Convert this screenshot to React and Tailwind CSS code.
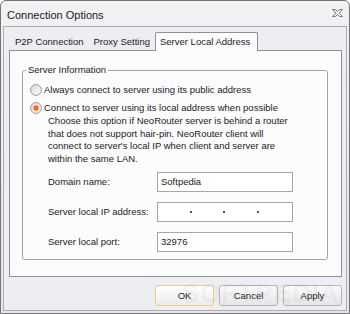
import React from "react";

function Radio({ checked }) {
  return (
    <svg width="12" height="12" viewBox="0 0 12 12" className="shrink-0">
      <defs>
        <linearGradient id={checked ? "rgc" : "rgu"} x1="0" y1="0" x2="1" y2="1">
          <stop offset="0" stopColor={checked ? "#f3e2d4" : "#d6d6d6"} />
          <stop offset="1" stopColor="#ffffff" />
        </linearGradient>
      </defs>
      <circle cx="6" cy="6" r="5.4" fill={`url(#${checked ? "rgc" : "rgu"})`} stroke="#8f8f8f" strokeWidth="0.9" />
      {checked && (
        <>
          <circle cx="6" cy="6" r="3.4" fill="#f8c49a" />
          <circle cx="6" cy="6" r="2.4" fill="#e2641a" />
          <circle cx="5.5" cy="5.4" r="0.9" fill="#f59a55" />
        </>
      )}
    </svg>
  );
}

function CloseIcon() {
  return (
    <svg width="11" height="8" viewBox="0 0 11 8" className="mt-[8px]">
      <polygon
        points="0.5,0.5 3.2,0.5 5.5,2.4 7.8,0.5 10.5,0.5 7.2,4 10.5,7.5 7.8,7.5 5.5,5.6 3.2,7.5 0.5,7.5 3.8,4"
        fill="#f4f4f6"
        stroke="#6e6e72"
        strokeWidth="0.9"
        strokeLinejoin="round"
      />
    </svg>
  );
}

function Field({ label, children }) {
  return (
    <div className="flex items-center h-[20px]">
      <span className="w-[109px]">{label}</span>
      <div className="w-[136px] h-[20px] border border-[#a5a7ad] bg-white flex items-center px-[3px]">
        {children}
      </div>
    </div>
  );
}

export default function App() {
  return (
    <div className="w-[350px] h-[314px] relative font-['Liberation_Sans',Arial,sans-serif] text-[#1b1b1b] text-[9.5px] leading-[12px]">
      <div className="w-full h-full flex flex-col bg-gradient-to-b from-[#f2f2f5] to-[#e6e6eb] border border-[#747478] rounded-t-[6px] px-[2px] pb-[2px]">
        <div className="h-[25px] shrink-0 flex items-start justify-between pl-[4px] pr-[4px]">
          <span className="mt-[8px] text-[11px] leading-[13px] text-[#1a1a1a]">Connection Options</span>
          <CloseIcon />
        </div>
        <div className="flex-1 border border-[#acacb2] bg-[#eeeef2] flex flex-col pl-[5px] pr-[4px] pt-[5px] pb-[4px]">
          <div className="h-[18px] flex items-end ml-[1px] shrink-0">
            <div className="h-[18px] px-[5px] pt-[1px] flex items-center">P2P Connection</div>
            <div className="h-[18px] px-[5px] pt-[1px] flex items-center">Proxy Setting</div>
            <div className="h-[19px] -mb-px relative z-10 border border-b-0 border-[#8e9197] bg-[#fcfcfc] rounded-t-[2px] pl-[4px] pr-[7px] flex items-center">
              Server Local Address
            </div>
          </div>
          <div className="h-[227px] shrink-0 border border-[#8e9197] bg-[#fcfcfc] flex flex-col">
            <fieldset className="ml-[12px] mr-[13px] mt-[13px] border border-[#a3a3a6] rounded-[3px] pb-[7px]">
              <legend className="ml-[3px] px-[2px] leading-[12px]">Server Information</legend>
              <div className="pl-[7px] pt-[7px] flex flex-col">
                <div className="flex items-center h-[14px] gap-[2px]">
                  <Radio checked={false} />
                  <span>Always connect to server using its public address</span>
                </div>
                <div className="flex items-center h-[14px] gap-[2px] mt-[4px]">
                  <Radio checked />
                  <span>Connect to server using its local address when possible</span>
                </div>
                <div className="pl-[18px] flex flex-col">
                  <p className="leading-[12.5px] w-[250px]">
                    Choose this option if NeoRouter server is behind a router that does not support hair-pin. NeoRouter client will connect to server's local IP when client and server are within the same LAN.
                  </p>
                  <div className="mt-[7px] flex flex-col gap-[10px]">
                    <Field label="Domain name:">
                      <span>Softpedia</span>
                    </Field>
                    <Field label="Server local IP address:">
                      <div className="grid grid-cols-4 w-full h-full -mx-[3px] min-w-[134px]">
                        <div className="flex items-center justify-end"><span className="w-[2px] h-[2px] bg-[#4a5070]" /></div>
                        <div className="flex items-center justify-end"><span className="w-[2px] h-[2px] bg-[#4a5070]" /></div>
                        <div className="flex items-center justify-end"><span className="w-[2px] h-[2px] bg-[#4a5070]" /></div>
                        <div />
                      </div>
                    </Field>
                    <Field label="Server local port:">
                      <span>32976</span>
                    </Field>
                  </div>
                </div>
              </div>
            </fieldset>
          </div>
          <div className="mt-[8px] h-[21px] flex justify-end gap-[5px] shrink-0">
            <button className="w-[59px] h-[21px] rounded-[3px] border border-[#ead07a] bg-gradient-to-b from-[#ffffff] to-[#ececee] flex items-center justify-center">
              OK
            </button>
            <button className="w-[59px] h-[21px] rounded-[3px] border border-[#b4b4b8] bg-gradient-to-b from-[#fafafa] to-[#e6e6ea] flex items-center justify-center">
              Cancel
            </button>
            <button className="w-[59px] h-[21px] rounded-[3px] border border-[#b4b4b8] bg-gradient-to-b from-[#fafafa] to-[#e6e6ea] flex items-center justify-center">
              Apply
            </button>
          </div>
        </div>
      </div>
      <div className="pointer-events-none absolute left-[182px] top-[279px] text-[26px] leading-[28px] font-bold tracking-[1px] text-[rgba(120,120,130,0.08)]">
        SOFTPEDIA<sup className="text-[7px]">®</sup>
      </div>
    </div>
  );
}
